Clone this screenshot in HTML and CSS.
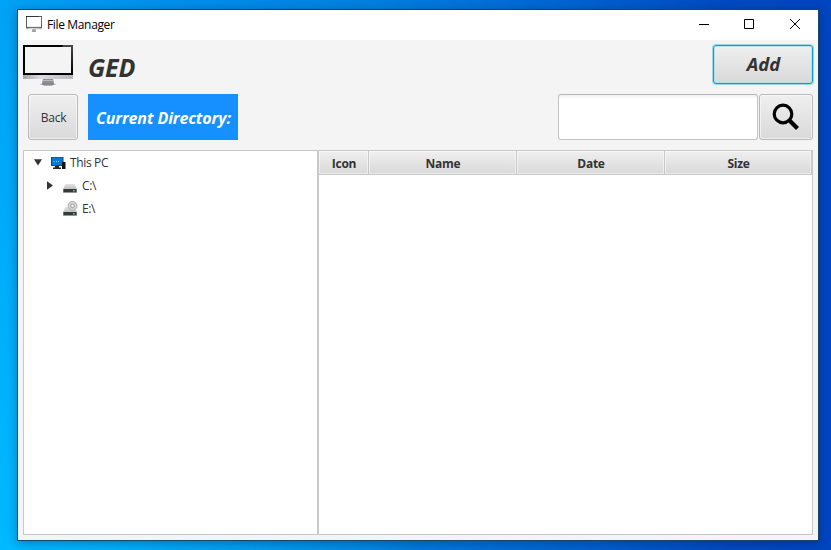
FILE: index.html
```html
<!DOCTYPE html>
<html lang="en">
<head>
<meta charset="utf-8">
<title>File Manager</title>
<link rel="stylesheet" href="styles.css">
</head>
<body>
<svg class="defs" width="0" height="0" aria-hidden="true">
  <defs>
    <linearGradient id="chin"><stop offset="0" stop-color="#a4a4a8"/><stop offset=".35" stop-color="#dcdcdf"/><stop offset="1" stop-color="#b8b8bc"/></linearGradient>
    <linearGradient id="glare" x2="0" y2="1"><stop offset="0" stop-color="#484848"/><stop offset="1" stop-color="#000"/></linearGradient>
    <linearGradient id="metal" x2="0" y2="1"><stop offset="0" stop-color="#e3e4e4"/><stop offset="1" stop-color="#bfc1c2"/></linearGradient>
    <symbol id="monitor" viewBox="0 0 50 41" preserveAspectRatio="none">
      <path fill="#000" d="M0 0H50V30H0z"/>
      <path fill="url(#glare)" d="M40 0H50V28H48V2H39z"/>
      <path class="screen" d="M2 2H48V28H2z"/>
      <path fill="url(#chin)" d="M0 30H50V34H0z"/>
      <path fill="#8f9095" d="M20 34H30L31 38H19z"/>
      <path fill="#b9babd" d="M20 35H30V36H20z"/>
      <ellipse cx="25" cy="39.2" rx="8" ry="1" fill="#bbbcbf"/>
      <path fill="#85868a" d="M19 38H31V39.5L29 40.5H21L19 39.5z"/>
    </symbol>
    <symbol id="drive" viewBox="0 0 14 9">
      <path fill="url(#metal)" d="M2.5 0h9L14 5H0z"/>
      <path fill="#36393b" d="M.3 5h13.4v3.4H.3z"/>
      <path fill="#8b8e90" d="M.3 8.2h13.4V9H.3z"/>
      <path fill="#35e34c" d="M10 6h1.7v1.5H10z"/>
    </symbol>
  </defs>
</svg>
<main class="window">
  <header class="titlebar">
    <svg class="app-icon"><use href="#monitor"/></svg>
    <span class="app-title">File Manager</span>
    <svg class="controls" viewBox="0 0 102 12" fill="none" stroke="#000" stroke-width="1">
      <path d="M0 6.5H10"/><path d="M45.5 1.5H54.5V10.5H45.5z"/><path d="M91 1L101 11M101 1L91 11"/>
    </svg>
  </header>
  <section class="brand-row">
    <svg class="logo"><use href="#monitor"/></svg>
    <h1 class="brand">GED</h1>
    <button class="btn add"><span>Add</span></button>
  </section>
  <section class="toolbar">
    <button class="btn back"><span>Back</span></button>
    <div class="current"><span>Current Directory:</span></div>
    <input class="search" type="text" aria-label="Search">
    <button class="btn find" aria-label="Find">
      <svg width="28" height="28" viewBox="0 0 28 28" fill="none" stroke="#000"><circle cx="11" cy="11" r="8.8" stroke-width="3.2"/><path d="M17.5 17.5L25.5 25.5" stroke-width="4.2"/></svg>
    </button>
  </section>
  <section class="panes">
    <ul class="tree">
      <li class="node root">
        <svg class="arrow" width="9" height="7"><path d="M0 .2H8L4 6.5z"/></svg>
        <svg class="icon" width="15" height="14" viewBox="0 0 15 14">
          <path fill="#303c46" d="M0 1H12.5V10H0z"/><path fill="#0878d2" d="M1 1.5H11.5V9H1z"/><path fill="#8cc8f5" d="M2.5 5h1v1h-1zM5 5h1v1H5zM7 5h1v1H7z"/>
          <path fill="#20282e" d="M4 10H8V11.5H10V13H2V11.5H4z"/><path fill="#111" d="M11 6H14.5V13H11z"/>
        </svg>
        <span class="pc-label">This PC</span>
      </li>
      <li class="node child">
        <svg class="arrow side" width="7" height="9"><path d="M0 .3V8.7L6 4.5z"/></svg>
        <svg class="icon disk" width="14" height="9"><use href="#drive"/></svg>
        <span>C:\</span>
      </li>
      <li class="node child">
        <span class="arrow side"></span>
        <svg class="icon optical" width="15" height="15" viewBox="0 0 15 15">
          <svg y="6" width="14" height="9"><use href="#drive"/></svg>
          <circle cx="9.5" cy="4.9" r="4.5" fill="#d3d6d7" stroke="#a0a4a6" stroke-width=".8"/>
          <circle cx="9.5" cy="4.9" r="1.8" fill="#f3f3f3" stroke="#8d9294" stroke-width=".8"/>
        </svg>
        <span>E:\</span>
      </li>
    </ul>
    <div class="table">
      <div class="thead"><div><span>Icon</span></div><div><span>Name</span></div><div><span>Date</span></div><div><span>Size</span></div></div>
    </div>
  </section>
</main>
</body>
</html>
```
FILE: styles.css
```css
* { box-sizing: border-box; }
body {
  margin: 0;
  width: 831px;
  height: 550px;
  padding: 9px 12px 9px 17px;
  overflow: hidden;
  font: 12px/16px "Open Sans", "Noto Sans", sans-serif;
  color: #333;
  background:
    radial-gradient(ellipse 420px 540px at 0 100%, #00b9ff, rgba(0, 185, 255, 0)),
    linear-gradient(90deg, #00a2f5 0, #008feb 20%, #0080df 45%, #0061d0 70%, #0049c0 88%, #0045c0 100%);
}
.defs { position: absolute; }
.window {
  display: flex;
  flex-direction: column;
  width: 802px;
  height: 532px;
  border: 1px solid #174765;
  background: #f4f4f4;
  box-shadow: 0 2px 9px rgba(0, 20, 60, .35);
}
.titlebar {
  display: flex;
  align-items: center;
  height: 30px;
  padding: 0 17px 0 8px;
  background: #fff;
  color: #000;
}
.app-icon { width: 16px; height: 16px; margin-top: -2px; fill: #fff; }
.app-title { margin-left: 5px; letter-spacing: -.35px; }
.controls { width: 102px; height: 12px; margin: -2px 0 0 auto; }
.logo { width: 50px; height: 41px; fill: #f4f4f4; }
.brand-row { display: flex; height: 49px; padding: 5px 5px 0; }
.brand {
  margin: 5px 0 0 15px;
  font-size: 25px;
  line-height: 34px;
  font-style: italic;
  letter-spacing: -.2px;
}
.btn {
  display: flex;
  align-items: center;
  justify-content: center;
  padding: 0;
  border: 1px solid #b9b9b9;
  border-radius: 3px;
  background: linear-gradient(#efefef, #d9d9d9);
  box-shadow: inset 0 0 0 1px rgba(255, 255, 255, .55);
  font: inherit;
  color: #333;
}
.add {
  width: 100px;
  height: 39px;
  margin-left: auto;
  padding: 0 0 2px 1px;
  border-color: #039ed3;
  box-shadow: 0 0 0 1px rgba(3, 158, 211, .35), inset 0 0 0 1px rgba(170, 220, 235, .65);
  font-size: 18.5px;
  font-weight: 700;
  font-style: italic;
}
.toolbar { display: flex; height: 61px; padding: 5px 5px 10px 10px; }
.back { width: 50px; padding: 2px 0 0 1px; letter-spacing: -.25px; }
.current {
  display: flex;
  align-items: center;
  width: 150px;
  margin-left: 10px;
  padding: 1px 0 0 8px;
  background: #1690ff;
  color: #fff;
  font-size: 16px;
  font-weight: 700;
  font-style: italic;
  white-space: nowrap;
  letter-spacing: -.1px;
}
.search {
  width: 200px;
  margin: 0 1px 0 auto;
  border: 1px solid #c4c4c4;
  border-top-color: #b5b5b5;
  border-radius: 3px;
  background: linear-gradient(#f0f0f0, #fff 4px);
}
.find { width: 54px; }
.panes {
  display: flex;
  width: 790px;
  height: 385px;
  margin-left: 5px;
  border: 1px solid #c8c8c8;
  background: #fff;
}
.tree { width: 293px; margin: 0; padding: 0; list-style: none; }
.node { display: flex; align-items: center; height: 23px; }
.arrow { fill: #333; }
.root { padding-left: 10px; }
.root .icon { margin: 1px 4px 0 8px; }
.pc-label { letter-spacing: -.35px; }
.child { padding-left: 23px; letter-spacing: -.4px; }
.side { width: 7px; }
.child .icon { margin: 0 5px 0 9px; }
.child .disk { margin-top: 5px; }
.child .optical { margin-right: 4px; }
.table { flex: 1; border-left: 2px solid #c8c8c8; }
.thead {
  display: grid;
  grid-template-columns: 50px 148px 148px 147px;
  height: 24px;
  border-bottom: 1px solid #c8c8c8;
  font-weight: 700;
  letter-spacing: -.25px;
}
.thead div {
  display: flex;
  align-items: center;
  justify-content: center;
  padding: 2px 0 0 1px;
  border-right: 1px solid #c8c8c8;
  background: linear-gradient(#efefef, #d9d9d9);
  box-shadow: inset 0 0 0 1px rgba(255, 255, 255, .5);
}
```
